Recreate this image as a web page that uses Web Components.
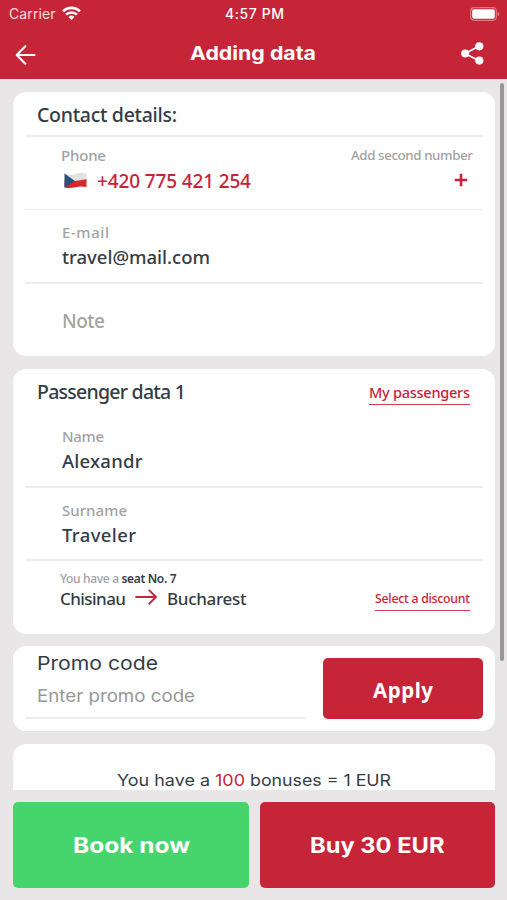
<!DOCTYPE html>
<html lang="en">
<head>
<meta charset="utf-8">
<title>Adding data</title>
<style>
  html, body { margin: 0; height: 100%; }
  body { font-family: "Noto Sans", "Open Sans", sans-serif; background: #e8e6e7; overflow: hidden; }
</style>
</head>
<body>
<booking-screen></booking-screen>
<script>
const define = (name, html, setup) => {
  const template = document.createElement('template');
  template.innerHTML = html;
  customElements.define(name, class extends HTMLElement {
    constructor() {
      super();
      this.attachShadow({ mode: 'open' }).append(template.content.cloneNode(true));
    }
    connectedCallback() { if (setup) setup(this, this.shadowRoot); }
  });
};

/* One line of text that fills the width "w": tracked, or with "wide" letters stretched. */
define('fit-text', `<style>
  :host { display: inline-block; white-space: pre; flex: none; }
  :host([face=geo]) { font-family: Inter, sans-serif; }
  span { display: inline-block; transform-origin: 0 50%; }
</style><span><slot></slot></span>`, (el, root) => {
  const size = el.getAttribute('size'), w = +el.getAttribute('w');
  el.style.fontSize = size + 'px';
  el.style.fontWeight = el.getAttribute('weight') || 500;
  el.style.lineHeight = (el.getAttribute('lh') || 24) + 'px';
  const color = el.getAttribute('color');
  if (color) el.style.color = color;
  const natural = el.getBoundingClientRect().width;
  if (el.hasAttribute('wide')) root.querySelector('span').style.transform = 'scaleX(' + (w / natural).toFixed(4) + ')';
  else el.style.letterSpacing = ((w - natural) / (el.textContent.length - 1)).toFixed(3) + 'px';
  el.style.width = w + 'px';
});

define('status-bar', `<style>
  :host { display: grid; grid-template-columns: 1fr auto 1fr; align-items: center; height: 27px; padding: 0 7px 0 9px; color: #fff; }
  .l { display: flex; align-items: center; gap: 6px; }
  .r { justify-self: end; display: flex; }
</style>
<div class="l"><fit-text face="geo" size="14" w="46.5" weight="400" color="#fbdde1">Carrier</fit-text>
<svg width="19" height="15" viewBox="0 0 19 15" fill="none" stroke="#fff" stroke-width="2.6"><path d="M1 5.4a12 12 0 0 1 17 0M4 8.7a7.800 7.800 0 0 1 11 0"/><path d="M9.500 14 6.500 11a4.300 4.300 0 0 1 6 0Z" fill="#fff" stroke="none"/></svg></div>
<fit-text face="geo" size="14" w="59" weight="500">4:57 PM</fit-text>
<div class="r"><svg width="30" height="14" viewBox="0 0 30 14"><rect x=".7" y=".7" width="25.600" height="12.600" rx="3.500" fill="none" stroke="#e07a89" stroke-width="1.200"/><rect x="2.200" y="2.200" width="22.600" height="9.600" rx="2" fill="#fff"/><path d="M27.600 4.700v4.600q1.800-.7 1.800-2.300t-1.800-2.300Z" fill="#e07a89"/></svg></div>`);

define('nav-bar', `<style>
  :host { display: grid; grid-template-columns: 1fr auto 1fr; align-items: center; height: 52px; padding: 0 23.500px 0 15px; color: #fff; }
  svg { display: block; }
  .b { margin-top: 4px; }
  .s { justify-self: end; }
  ::slotted(*) { margin: 1px 0 0 8px; }
</style>
<svg class="b" width="21" height="20" viewBox="0 0 21 20" fill="none" stroke="#fff" stroke-width="2.100" stroke-linecap="round" stroke-linejoin="round"><path d="M19.500 10H1.800M10.300 1.300 1.700 10l8.600 8.700"/></svg>
<slot></slot>
<svg class="s" width="23" height="23" viewBox="0 0 23 23" fill="#fff"><path d="M18.500 4 4 11.500l14.500 7.500" fill="none" stroke="#fff" stroke-width="1.700"/><circle cx="18.300" cy="4.300" r="4.100"/><circle cx="4.200" cy="11.500" r="4"/><circle cx="18.300" cy="18.600" r="4.100"/></svg>`);

define('ui-card', `<style>
  :host { display: flex; flex-direction: column; box-sizing: border-box; background: #fff; border-radius: 13px; padding: 0 12px; flex: none; }
</style><slot></slot>`);

define('ui-rule', `<style>:host { display: block; height: 1.500px; background: #ededee; flex: none; }</style>`);

define('ui-field', `<style>
  :host { display: flex; flex-direction: column; align-items: flex-start; box-sizing: border-box; padding: 12px 0 0 37px; color: #343c46; }
  .label { color: #a2a2a2; height: 20px; display: flex; align-items: center; }
  .value { height: 24px; display: flex; align-items: center; margin-top: 3px; }
</style><div class="label"><slot name="label"></slot></div><div class="value"><slot></slot></div>`);

define('ui-link', `<style>
  :host { display: block; color: #c82338; border-bottom: 1.500px solid #cf3f52; flex: none; }
  ::slotted(*) { display: block; }
</style><slot></slot>`);

define('ui-button', `<style>
  :host { display: flex; align-items: center; justify-content: center; background: #c62437; color: #fff; border-radius: 5px; box-sizing: border-box; }
  :host([kind=green]) { background: #46d46d; }
</style><slot></slot>`);

define('czech-flag', `<style>:host { display: block; width: 23px; height: 17px; margin-right: 10px; } svg { display: block; }</style>
<svg width="23" height="17" viewBox="0 0 23 17"><path d="M.5 1.500Q6 4 11.500 2T22.500 1.300V9L11 9.500.5 8Z" fill="#e3e2e2"/><path d="M.5 8.500 11 9l11.500-1.800V15q-5.500-1-11 .3T.5 15.500Z" fill="#d62729"/><path d="M.5 1.500 11 9 .5 15.500Z" fill="#28517f"/></svg>`);

define('booking-screen', `<style>
  :host { display: grid; grid-template-rows: 79px 711px 110px; width: 507px; height: 900px; position: relative; color: #343c46; overflow: hidden; }
  header { background: #c62437; }
  main { display: flex; flex-direction: column; gap: 12.500px; padding: 13px 12px 0 13px; overflow: hidden; box-shadow: inset 0 1px #f3dadd; }
  footer { display: grid; grid-template-columns: 236px 235px; column-gap: 11px; padding: 12px 12px 12px 13px; }
  .thumb { position: absolute; right: 3px; top: 83px; width: 4px; height: 578px; border-radius: 2px; background: #989697; }
  .head { display: flex; justify-content: space-between; align-items: flex-start; box-sizing: border-box; padding: 0 13px 0 12px; flex: none; }
  .phone { display: flex; justify-content: space-between; height: 72px; flex: none; }
  .add { display: flex; flex-direction: column; align-items: flex-end; padding: 8px 10px 0 0; color: #a2a2a2; }
  .plus { margin: 8px 5.500px 0 0; }
  .trip { display: flex; justify-content: space-between; align-items: flex-start; padding: 10px 13px 0 35px; }
  .seat, .route, .bonus { display: flex; align-items: center; }
  .seat { color: #a0a0a0; gap: 2.500px; height: 16px; }
  .route { height: 22px; margin-top: 1px; }
  .route svg { margin: 0 10px 3px 9px; }
  .promo { display: grid; grid-template-columns: 280px 160px; justify-content: space-between; }
  .bonus { justify-content: center; gap: 5px; padding-top: 24px; }
  .red { color: #c82338; }
  svg { display: block; }
</style>
<header><status-bar></status-bar><nav-bar><fit-text face="geo" wide size="19" w="126" weight="700" lh="26">Adding data</fit-text></nav-bar></header>
<main>
  <ui-card style="height:264px">
    <div class="head" style="height:43px;padding-top:11px"><fit-text size="19.500" w="140">Contact details:</fit-text></div>
    <ui-rule></ui-rule>
    <div class="phone">
      <ui-field style="padding:8px 0 0 36px"><fit-text slot="label" size="15" w="45" lh="20">Phone</fit-text>
        <span style="display:flex;align-items:center;margin:2px 0 0 3px" class="red"><czech-flag></czech-flag><fit-text size="19" w="154" color="#c82338">+420 775 421 254</fit-text></span></ui-field>
      <div class="add"><fit-text size="13.300" w="122" lh="20">Add second number</fit-text>
        <svg class="plus" width="14" height="14" viewBox="0 0 14 14"><path d="M7 .7v12.600M.7 7h12.600" stroke="#c82338" stroke-width="2.600"/></svg></div>
    </div>
    <ui-rule></ui-rule>
    <ui-field style="height:72px"><fit-text slot="label" size="15" w="47" lh="20">E-mail</fit-text><fit-text size="18.500" w="148">travel@mail.com</fit-text></ui-field>
    <ui-rule></ui-rule>
    <div style="padding:25px 0 0 37px;color:#a2a2a2"><fit-text size="19" w="43">Note</fit-text></div>
  </ui-card>

  <ui-card style="height:265px">
    <div class="head" style="height:45px;padding-top:11px"><fit-text size="19.500" w="149">Passenger data 1</fit-text>
      <ui-link><fit-text size="14.500" w="101" lh="24">My passengers</fit-text></ui-link></div>
    <ui-field style="height:72.500px"><fit-text slot="label" size="15" w="42" lh="20">Name</fit-text><fit-text size="18.500" w="80.500">Alexandr</fit-text></ui-field>
    <ui-rule></ui-rule>
    <ui-field style="height:71.500px"><fit-text slot="label" size="15" w="65" lh="20">Surname</fit-text><fit-text size="18.500" w="74">Traveler</fit-text></ui-field>
    <ui-rule></ui-rule>
    <div class="trip">
      <div>
        <div class="seat"><fit-text size="12" w="59" lh="16">You have a</fit-text><fit-text size="12" w="55" lh="16" weight="600" color="#343c46">seat No. 7</fit-text></div>
        <div class="route"><fit-text size="17" w="66" lh="22">Chisinau</fit-text>
          <svg width="22" height="16" viewBox="0 0 22 16" fill="none" stroke="#c82338" stroke-width="1.900" stroke-linecap="round" stroke-linejoin="round"><path d="M1 8h20M14.300 1.300 21 8l-6.700 6.700"/></svg>
          <fit-text size="17" w="79.500" lh="22">Bucharest</fit-text></div>
      </div>
      <ui-link style="margin-top:17px"><fit-text size="12.300" w="95" lh="22">Select a discount</fit-text></ui-link>
    </div>
  </ui-card>

  <ui-card style="height:85px">
    <div class="promo">
      <div><div style="padding:6px 0 0 12px;height:23px"><fit-text face="geo" wide size="18.800" w="121" weight="400">Promo code</fit-text></div>
        <div style="padding:9px 0 0 12px;height:33px;color:#979797"><fit-text face="geo" wide size="17" w="158" weight="400">Enter promo code</fit-text></div>
        <ui-rule></ui-rule></div>
      <ui-button style="height:61px;margin-top:12px"><fit-text size="20.500" w="60" weight="700" lh="26" style="margin-top:3px">Apply</fit-text></ui-button>
    </div>
  </ui-card>

  <ui-card style="height:100px">
    <div class="bonus"><fit-text face="geo" wide size="16.500" w="93" weight="400">You have a</fit-text><fit-text face="geo" wide size="16.500" w="30" weight="400" color="#c82338">100</fit-text><fit-text face="geo" wide size="16.500" w="141" weight="400">bonuses = 1 EUR</fit-text></div>
  </ui-card>
</main>
<footer>
  <ui-button kind="green"><fit-text face="geo" wide size="21" w="117" weight="700" style="margin-top:1px">Book now</fit-text></ui-button>
  <ui-button><fit-text face="geo" wide size="21" w="134.500" weight="700" style="margin-top:1px">Buy 30 EUR</fit-text></ui-button>
</footer>
<div class="thumb"></div>`);
</script>
</body>
</html>
